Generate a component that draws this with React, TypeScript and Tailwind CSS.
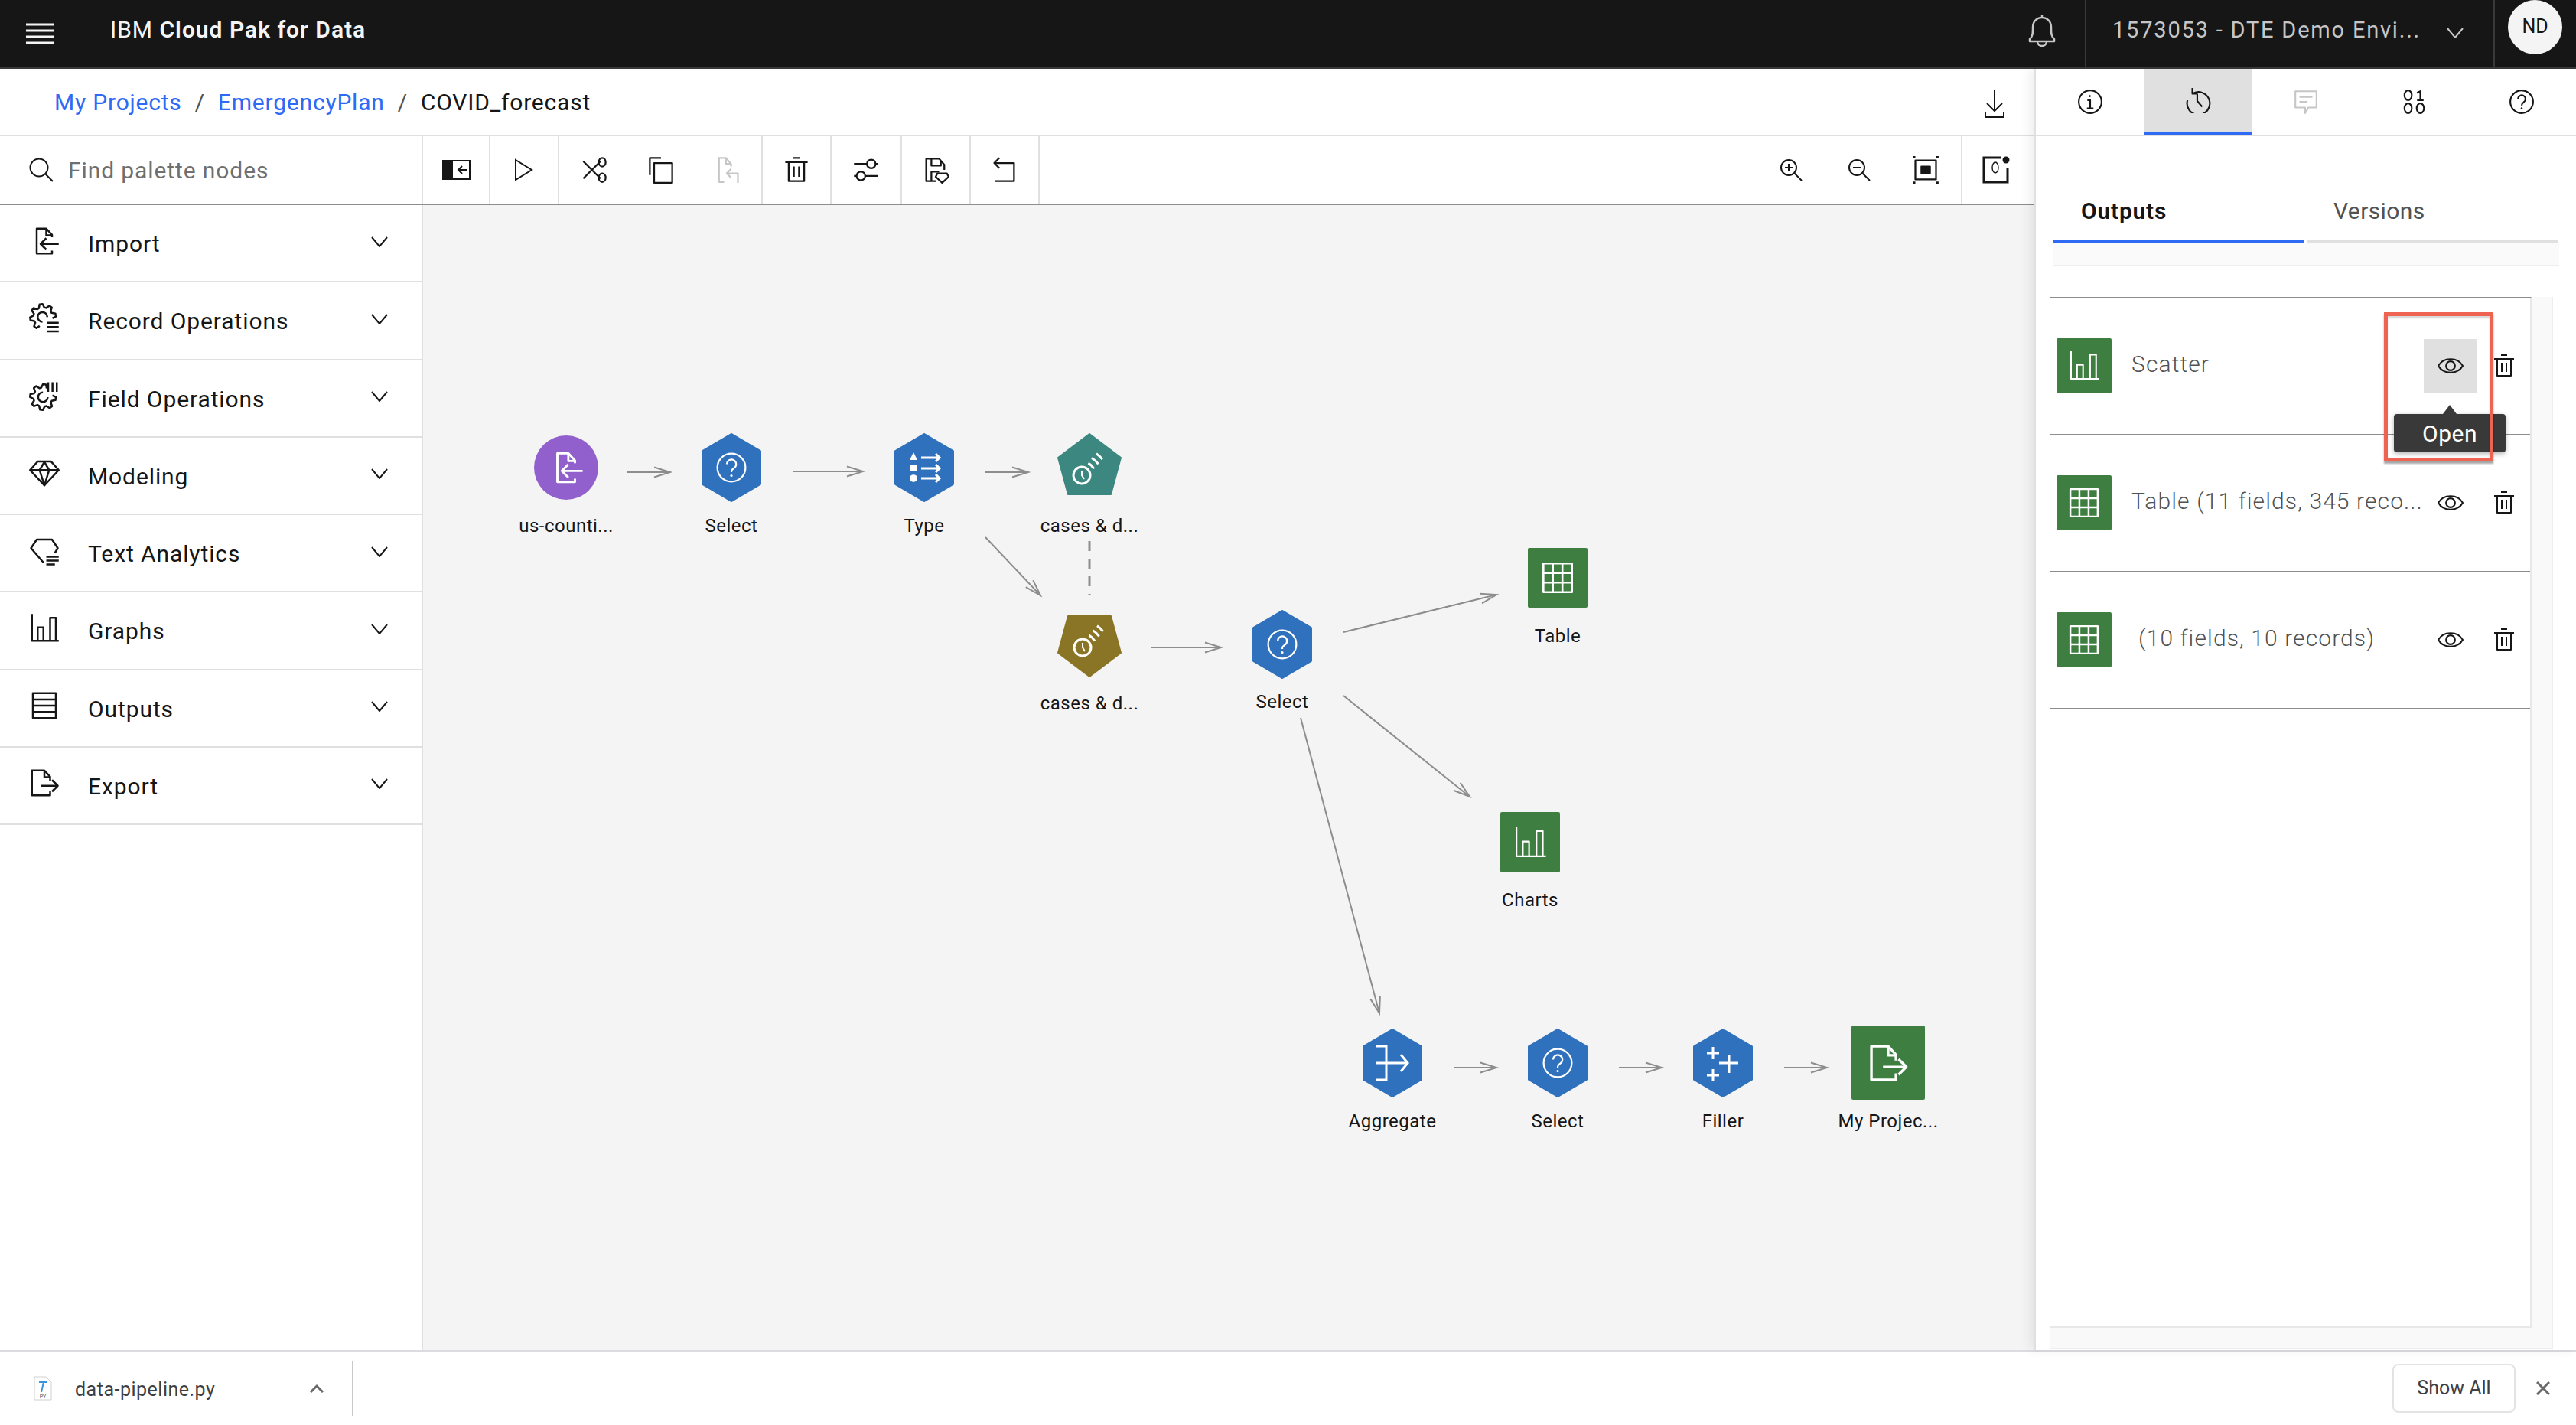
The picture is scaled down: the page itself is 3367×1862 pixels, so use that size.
import React from 'react';

type IconProps = React.SVGProps<SVGSVGElement>;

function Ico({ children, ...props }: IconProps) {
    return (
        <svg viewBox="0 0 32 32" fill="none" stroke="currentColor" strokeWidth={2} strokeLinejoin="round" {...props}>
            {children}
        </svg>
    );
}

// Partial gear outline, angles in degrees, clockwise from 3 o'clock
function gearPath(cx: number, cy: number, rIn: number, rOut: number, from: number, to: number) {
    const pts: string[] = [];
    const step = 45;
    const pos = (r: number, a: number) => {
        const rad = (a * Math.PI) / 180;
        return `${(cx + r * Math.cos(rad)).toFixed(2)} ${(cy + r * Math.sin(rad)).toFixed(2)}`;
    };
    for (let a = from; a < to; a += step) {
        pts.push(pos(rIn, a), pos(rOut, a + step * 0.22), pos(rOut, a + step * 0.52), pos(rIn, a + step * 0.74));
    }
    return 'M' + pts.join('L');
}

function arcPath(cx: number, cy: number, r: number, a0: number, a1: number) {
    const p = (a: number) => {
        const rad = (a * Math.PI) / 180;
        return `${(cx + r * Math.cos(rad)).toFixed(2)} ${(cy + r * Math.sin(rad)).toFixed(2)}`;
    };
    return `M${p(a0)}A${r} ${r} 0 0 1 ${p(a1)}`;
}

const DocImport = (p: IconProps) => (
    <Ico {...p}>
        <path d="M24 12V9.5L18 3H8V29H24V26" />
        <path d="M18 3V10H24" />
        <path d="M31 19H12M18 13L12 19L18 25" />
    </Ico>
);
const DocExport = (p: IconProps) => (
    <Ico {...p}>
        <path d="M22 14V9.5L16 3H3V29H22V24" />
        <path d="M16 3V10H22" />
        <path d="M12 19H30M24 13L30 19L24 25" />
    </Ico>
);
const RecordOps = (p: IconProps) => (
    <Ico {...p}>
        <path d={gearPath(14.5, 14.5, 10, 13.5, 110, 380)} />
        <path d="M19 14.5A5 5 0 1 0 14 19.5" />
        <path d="M19 20.5H31M19 25H31M19 29.5H31" />
    </Ico>
);
const FieldOps = (p: IconProps) => (
    <Ico {...p}>
        <path d={gearPath(14.5, 17.5, 10, 13.5, -10, 265)} />
        <path d="M14.5 12.5A5 5 0 1 0 19.5 17.5" />
        <path d="M20 2V12M24.5 2V12M29 2V12" />
    </Ico>
);
const Gem = (p: IconProps) => (
    <Ico {...p}>
        <path d="M9 4H23L31 13L16 29L1 13Z" />
        <path d="M1 13H31M11 13L16 4.5L21 13L16 29L11 13" />
    </Ico>
);
const TextAn = (p: IconProps) => (
    <Ico {...p}>
        <path d="M15 28L2 13L8 4H24L30 13L27 18" />
        <path d="M18 22H31M18 26H31M18 30H27" />
    </Ico>
);
const Bars = (p: IconProps) => (
    <Ico {...p}>
        <path d="M3 1V29H31" />
        <path d="M9 29V15H15V29M22 29V5H28V29" />
    </Ico>
);
const Rows = (p: IconProps) => (
    <Ico {...p}>
        <path d="M4 3H28V29H4ZM4 9.5H28M4 16H28M4 22.5H28" />
    </Ico>
);
const GridIcon = (p: IconProps) => (
    <Ico {...p}>
        <path d="M3 3H29V29H3ZM3 11.6H29M3 20.3H29M11.6 3V29M20.3 3V29" />
    </Ico>
);
const Eye = (p: IconProps) => (
    <Ico {...p}>
        <path d="M1 16C7 5 25 5 31 16C25 27 7 27 1 16Z" />
        <circle cx="16" cy="16" r="5.5" />
    </Ico>
);
const Trash = (p: IconProps) => (
    <Ico {...p}>
        <path d="M3 7H29M12 2H20M7 7V29H25V7M13 12V24M19 12V24" />
    </Ico>
);
const Magnifier = ({ sign, ...p }: IconProps & { sign?: 'plus' | 'minus' }) => (
    <Ico {...p}>
        <circle cx="13" cy="13" r="10" />
        <path d="M20.5 20.5L30 30" />
        {sign && <path d="M8 13H18" />}
        {sign === 'plus' && <path d="M13 8V18" />}
    </Ico>
);
const Help = (p: IconProps) => (
    <Ico {...p}>
        <ellipse cx="16" cy="16" rx="14" ry="14" />
        <path d="M11.5 12.5A4.6 4.6 0 1 1 18.5 16.5C17 17.5 16 18.5 16 20.5" />
        <circle cx="16" cy="24" r="1.2" fill="currentColor" stroke="none" />
    </Ico>
);

function ClockWaves({ cx, cy }: { cx: number; cy: number }) {
    return (
        <g fill="none" stroke="#fff" strokeWidth={3}>
            <circle cx={cx} cy={cy} r={11} />
            <path d={`M${cx} ${cy - 6}V${cy}L${cx + 3} ${cy + 5}`} strokeWidth={2} />
            <path d={arcPath(cx, cy, 18, -62, -28)} />
            <path d={arcPath(cx, cy, 26, -60, -34)} />
            <path d={arcPath(cx, cy, 34, -56, -38)} />
        </g>
    );
}

function QuestionMark({ cy = 45 }: { cy?: number }) {
    return <Help x={18} y={cy - 21} width={42} height={42} color="#fff" strokeWidth={1.7} />;
}

function Hex({ children }: { children?: React.ReactNode }) {
    return (
        <svg width="78" height="90" viewBox="0 0 78 90" className="block">
            <polygon points="39,1.5 76.5,23.5 76.5,66.5 39,88.5 1.5,66.5 1.5,23.5" fill="#2f71bd" stroke="#2f71bd" strokeWidth="3" strokeLinejoin="round" />
            {children}
        </svg>
    );
}

function Node({ className, gap, label, children }: { className: string; gap: string; label: string; children: React.ReactNode }) {
    return (
        <div className={`absolute w-[160px] flex flex-col items-center ${className}`}>
            {children}
            <span className={`${gap} text-[24px] leading-[30px] tracking-[0.5px] text-[#161616]`}>{label}</span>
        </div>
    );
}

function GreenTile({ children, className }: { children: React.ReactNode; className: string }) {
    return <div className={`flex items-center justify-center rounded-[2px] bg-[#3e7e41] text-white ${className}`}>{children}</div>;
}

function Edge({ x1, y1, x2, y2 }: { x1: number; y1: number; x2: number; y2: number }) {
    const a = Math.atan2(y2 - y1, x2 - x1);
    const head = (da: number) => `${x2 - 22 * Math.cos(a + da)} ${y2 - 22 * Math.sin(a + da)}`;
    return (
        <g>
            <path d={`M${x1} ${y1}L${x2} ${y2}`} />
            <path d={`M${head(0.3)}L${x2} ${y2}L${head(-0.3)}`} />
        </g>
    );
}

const edges = [
    [820, 617, 876, 617],
    [1036, 616, 1128, 616],
    [1288, 617, 1344, 617],
    [1288, 702, 1360, 778],
    [1504, 846, 1596, 846],
    [1756, 826, 1956, 777],
    [1756, 909, 1921, 1041],
    [1700, 938, 1803, 1324],
    [1900, 1395, 1956, 1395],
    [2116, 1395, 2172, 1395],
    [2332, 1395, 2388, 1395],
];

const palette = [
    { label: 'Import', icon: <DocImport width={40} height={40} /> },
    { label: 'Record Operations', icon: <RecordOps width={40} height={40} /> },
    { label: 'Field Operations', icon: <FieldOps width={40} height={40} /> },
    { label: 'Modeling', icon: <Gem width={40} height={40} /> },
    { label: 'Text Analytics', icon: <TextAn width={40} height={40} /> },
    { label: 'Graphs', icon: <Bars width={40} height={40} /> },
    { label: 'Outputs', icon: <Rows width={40} height={40} /> },
    { label: 'Export', icon: <DocExport width={40} height={40} /> },
];

const outputs = [
    { label: 'Scatter', kind: 'chart', text: 'ml-[26px] w-[382px]', active: true },
    { label: 'Table (11 fields, 345 reco...', kind: 'table', text: 'ml-[26px] w-[382px]', active: false },
    { label: '(10 fields, 10 records)', kind: 'table', text: 'ml-[35px] w-[373px]', active: false },
];

function ToolBtn({ className, children }: { className: string; children: React.ReactNode }) {
    return <div className={`flex h-full shrink-0 items-center justify-center border-r-2 border-[#e0e0e0] ${className}`}>{children}</div>;
}

export default function App() {
    return (
        <div className="flex h-screen w-full flex-col overflow-hidden bg-white font-['Roboto',sans-serif] text-[#161616]">
            {/* Top bar */}
            <header className="flex h-[90px] shrink-0 items-center border-b-2 border-[#393939] bg-[#161616] text-white">
                <svg width="36" height="28" viewBox="0 0 36 28" className="ml-[34px]" stroke="#f4f4f4" strokeWidth="3">
                    <path d="M0 2H36M0 10H36M0 18H36M0 26H36" />
                </svg>
                <div className="ml-[74px] mb-[10px] text-[30px] leading-none tracking-[1px] text-[#f4f4f4]">
                    IBM <span className="font-semibold">Cloud Pak for Data</span>
                </div>
                <div className="ml-auto flex h-full items-center">
                    <svg width="40" height="44" viewBox="0 0 40 44" fill="none" stroke="#c6c6c6" strokeWidth="2.5" strokeLinejoin="round" className="mr-[36px] mb-[8px]">
                        <path d="M20 1V5M4 33C8 29 8 26 8 18C8 10 13 5 20 5C27 5 32 10 32 18C32 26 32 29 36 33V36H4ZM14 36C14 44 26 44 26 36" />
                    </svg>
                    <div className="flex h-full w-[536px] items-center border-x-2 border-[#393939] pl-[34px]">
                        <span className="mb-[8px] text-[29px] tracking-[1.8px] text-[#c6c6c6]">1573053 - DTE Demo Envi...</span>
                        <svg width="22" height="14" viewBox="0 0 22 14" fill="none" stroke="#c6c6c6" strokeWidth="2" className="ml-[34px] mb-[2px]">
                            <path d="M1 1L11 13L21 1" />
                        </svg>
                    </div>
                    <div className="ml-[17px] mr-[18px] mb-[18px] flex h-[71px] w-[71px] items-center justify-center rounded-full bg-[#f4f4f4] text-[25px] text-[#161616]">ND</div>
                </div>
            </header>

            <div className="flex min-h-0 flex-1">
                {/* Main column */}
                <div className="flex w-[2659px] shrink-0 flex-col">
                    <div className="flex h-[88px] shrink-0 items-center border-b-2 border-[#e0e0e0] pl-[71px] text-[30px] tracking-[0.8px]">
                        <span className="text-[#2f6af5]">My Projects</span>
                        <span className="mx-[17px] text-[#525252]">/</span>
                        <span className="text-[#2f6af5]">EmergencyPlan</span>
                        <span className="mx-[17px] text-[#525252]">/</span>
                        <span>COVID_forecast</span>
                        <svg width="30" height="38" viewBox="0 0 30 38" fill="none" stroke="#161616" strokeWidth="2" className="ml-auto mr-[37px] mt-[6px]">
                            <path d="M15 1V28M5 18L15 28L25 18M3 29V36H27V29" />
                        </svg>
                    </div>

                    {/* Toolbar */}
                    <div className="flex h-[90px] shrink-0 items-center border-b-2 border-[#8d8d8d]">
                        <div className="flex h-full w-[553px] shrink-0 items-center border-r-2 border-[#e0e0e0] pl-[38px]">
                            <svg width="32" height="32" viewBox="0 0 32 32" fill="none" stroke="#161616" strokeWidth="2">
                                <circle cx="13" cy="13" r="11.5" />
                                <path d="M21 21L31 31" />
                            </svg>
                            <input
                                readOnly
                                placeholder="Find palette nodes"
                                className="ml-[19px] w-[420px] bg-transparent text-[30px] tracking-[0.9px] outline-none placeholder:text-[#6f6f6f]"
                            />
                        </div>
                        <ToolBtn className="w-[88px]">
                            <svg width="37" height="26" viewBox="0 0 37 26" fill="none">
                                <rect x="0" y="0" width="37" height="26" fill="#161616" />
                                <rect x="14" y="2" width="21" height="22" fill="#fff" />
                                <path d="M33 13H21M26 8L21 13L26 18" stroke="#161616" strokeWidth="2" />
                            </svg>
                        </ToolBtn>
                        <ToolBtn className="w-[90px]">
                            <svg width="26" height="30" viewBox="0 0 26 30" fill="none" stroke="#161616" strokeWidth="2" strokeLinejoin="miter">
                                <path d="M2 2L23 15L2 28Z" />
                            </svg>
                        </ToolBtn>
                        <ToolBtn className="w-[266px]">
                            <div className="flex w-full items-center">
                                <div className="flex flex-1 justify-center pl-[2px]">
                                    <Ico width={36} height={36}>
                                        <path d="M3 6L23 26M3 26L23 6" />
                                        <ellipse cx="25" cy="7" rx="4" ry="5" />
                                        <ellipse cx="25" cy="25" rx="4" ry="5" />
                                    </Ico>
                                </div>
                                <div className="flex flex-1 justify-center">
                                    <Ico width={36} height={36}>
                                        <path d="M3 22V2H16" />
                                        <rect x="8" y="8" width="21" height="23" />
                                    </Ico>
                                </div>
                                <div className="flex flex-1 justify-center">
                                    <Ico width={36} height={36} color="#c6c6c6">
                                        <path d="M20 12V9L14 2H6V30H12" />
                                        <path d="M14 2V9H20" />
                                        <path d="M20 15L15 20L20 25M15 20H28V31" />
                                    </Ico>
                                </div>
                            </div>
                        </ToolBtn>
                        <ToolBtn className="w-[90px]">
                            <Trash width={36} height={36} />
                        </ToolBtn>
                        <ToolBtn className="w-[92px]">
                            <Ico width={36} height={36}>
                                <path d="M2 9H17M27 9H30M2 23H5M15 23H30" />
                                <circle cx="22" cy="9" r="5" />
                                <circle cx="10" cy="23" r="5" />
                            </Ico>
                        </ToolBtn>
                        <ToolBtn className="w-[90px]">
                            <Ico width={36} height={36}>
                                <path d="M26 16V10L20 3H5V29H16" />
                                <path d="M11 3V11H22V6" />
                                <path d="M11 29V18H20" />
                                <path d="M18 20H29L31 24L23.5 31L16 24Z" />
                            </Ico>
                        </ToolBtn>
                        <ToolBtn className="w-[90px]">
                            <Ico width={36} height={36}>
                                <path d="M10 2L4 8L10 14M4 8H27V29H5" />
                            </Ico>
                        </ToolBtn>

                        <div className="ml-auto flex h-full items-center">
                            <div className="flex w-[89px] justify-center"><Magnifier sign="plus" width={32} height={32} /></div>
                            <div className="flex w-[89px] justify-center"><Magnifier sign="minus" width={32} height={32} /></div>
                            <div className="flex w-[89px] justify-center pr-[3px]">
                                <Ico width={36} height={36}>
                                    <path d="M1 1H4M28 1H31M1 31H4M28 31H31" strokeWidth={3} />
                                    <rect x="4" y="5" width="24" height="22" />
                                    <rect x="11" y="12" width="10" height="8" fill="currentColor" />
                                </Ico>
                            </div>
                            <div className="flex h-full w-[96px] items-center justify-center border-l-2 border-[#e0e0e0] pr-[7px]">
                                <svg width="36" height="36" viewBox="0 0 36 36" fill="none" stroke="#161616" strokeWidth="3">
                                    <path d="M24 2H2V34H33V15" />
                                    <ellipse cx="17" cy="15" rx="4" ry="7" strokeWidth="1.4" />
                                    <circle cx="31" cy="5" r="4.5" fill="#161616" stroke="none" />
                                </svg>
                            </div>
                        </div>
                    </div>

                    <div className="flex min-h-0 flex-1">
                        {/* Palette */}
                        <aside className="w-[553px] shrink-0 border-r-2 border-[#e0e0e0]">
                            {palette.map((row) => (
                                <div key={row.label} className="flex h-[101.25px] items-center border-b-2 border-[#e0e0e0] pl-[38px]">
                                    <div className="mb-[6px]">{row.icon}</div>
                                    <span className="ml-[37px] mt-[2px] text-[30px] tracking-[0.9px]">{row.label}</span>
                                    <svg width="22" height="14" viewBox="0 0 22 14" fill="none" stroke="#161616" strokeWidth="2" className="ml-auto mr-[44px] mb-[4px]">
                                        <path d="M1 1L11 13L21 1" />
                                    </svg>
                                </div>
                            ))}
                        </aside>

                        {/* Flow canvas */}
                        <main className="relative min-w-0 flex-1 overflow-hidden bg-[#f4f4f4]">
                            <svg viewBox="553 268 2106 1498" fill="none" stroke="#8d8d8d" strokeWidth="2" className="absolute left-0 top-0 h-[1498px] w-[2106px]">
                                {edges.map(([x1, y1, x2, y2], i) => (
                                    <Edge key={i} x1={x1} y1={y1} x2={x2} y2={y2} />
                                ))}
                                <path d="M1424 707V778" strokeWidth="3" strokeDasharray="13 10" />
                            </svg>

                            <Node className="left-[107px] top-[301px]" gap="mt-[19px]" label="us-counti...">
                                <div className="flex h-[84px] w-[84px] items-center justify-center rounded-full bg-[#9160cd]">
                                    <DocImport width={46} height={46} color="#fff" />
                                </div>
                            </Node>
                            <Node className="left-[323px] top-[298px]" gap="mt-[16px]" label="Select">
                                <Hex><QuestionMark /></Hex>
                            </Node>
                            <Node className="left-[575px] top-[298px]" gap="mt-[16px]" label="Type">
                                <Hex>
                                    <g fill="#fff">
                                        <polygon points="20,35 30,35 25,25" />
                                        <rect x="20.5" y="41" width="9" height="9" />
                                        <ellipse cx="25" cy="59" rx="5" ry="4.8" />
                                    </g>
                                    <path d="M35 32H59M54 27L59 32L54 37M35 46H59M54 41L59 46L54 51M35 59H59M54 54L59 59L54 64" fill="none" stroke="#fff" strokeWidth="3" />
                                </Hex>
                            </Node>
                            <Node className="left-[791px] top-[298px]" gap="mt-[25px]" label="cases & d...">
                                <svg width="84" height="81" viewBox="0 0 84 81" className="block">
                                    <polygon points="42,1 83,32 70,80 14,80 1,32" fill="#3c8880" stroke="#3c8880" strokeWidth="2" strokeLinejoin="round" />
                                    <ClockWaves cx={32} cy={55} />
                                </svg>
                            </Node>
                            <Node className="left-[791px] top-[536px]" gap="mt-[19px]" label="cases & d...">
                                <svg width="84" height="81" viewBox="0 0 84 81" className="block">
                                    <polygon points="42,80 83,49 70,1 14,1 1,49" fill="#8a7425" stroke="#8a7425" strokeWidth="2" strokeLinejoin="round" />
                                    <ClockWaves cx={33} cy={42} />
                                </svg>
                            </Node>
                            <Node className="left-[1043px] top-[529px]" gap="mt-[15px]" label="Select">
                                <Hex><QuestionMark /></Hex>
                            </Node>
                            <Node className="left-[1403px] top-[448px]" gap="mt-[22px]" label="Table">
                                <GreenTile className="h-[78px] w-[78px]"><GridIcon width={46} height={46} strokeWidth={1.8} /></GreenTile>
                            </Node>
                            <Node className="left-[1367px] top-[793px]" gap="mt-[21px]" label="Charts">
                                <GreenTile className="h-[79px] w-[78px]"><Bars width={44} height={44} strokeWidth={1.6} /></GreenTile>
                            </Node>
                            <Node className="left-[1187px] top-[1076px]" gap="mt-[16px]" label="Aggregate">
                                <Hex>
                                    <path d="M18 23H31V67H18M18 45H59M50 34L59 45L50 56" fill="none" stroke="#fff" strokeWidth="3" />
                                </Hex>
                            </Node>
                            <Node className="left-[1403px] top-[1076px]" gap="mt-[16px]" label="Select">
                                <Hex><QuestionMark /></Hex>
                            </Node>
                            <Node className="left-[1619px] top-[1076px]" gap="mt-[16px]" label="Filler">
                                <Hex>
                                    <path d="M26 24V40M18 32H34M26 53V68M18 61H34M47 34V58M34 45H59" fill="none" stroke="#fff" strokeWidth="3" />
                                </Hex>
                            </Node>
                            <Node className="left-[1835px] top-[1072px]" gap="mt-[13px]" label="My Projec...">
                                <GreenTile className="h-[97px] w-[96px]"><DocExport width={54} height={54} /></GreenTile>
                            </Node>
                        </main>
                    </div>
                </div>

                {/* Right panel */}
                <section className="relative z-10 min-w-0 flex-1 border-l-2 border-[#e0e0e0] bg-white shadow-[-6px_0_14px_rgba(0,0,0,0.07)]">
                    <div className="grid h-[88px] grid-cols-5 border-b-2 border-[#e0e0e0]">
                        <div className="flex items-center justify-center">
                            <Ico width={34} height={34}>
                                <circle cx="16" cy="16" r="14" />
                                <path d="M12 24H20M16 24V14H12.5" />
                                <circle cx="15.5" cy="9" r="1.3" fill="currentColor" stroke="none" />
                            </Ico>
                        </div>
                        <div className="flex items-center justify-center border-b-4 border-[#2f6af5] bg-[#e0e0e0]">
                            <Ico width={34} height={34}>
                                <path d="M9 1V8H15" />
                                <path d="M9 8A14 14 0 1 1 3 16" />
                                <path d="M15 8V17L21 24" />
                            </Ico>
                        </div>
                        <div className="flex items-center justify-center">
                            <Ico width={34} height={34} color="#c6c6c6">
                                <path d="M3 3H29V23H19L15 30V23H3Z" />
                                <path d="M8 10H24M8 16H18" />
                            </Ico>
                        </div>
                        <div className="flex items-center justify-center">
                            <Ico width={34} height={34}>
                                <ellipse cx="9" cy="8" rx="4.5" ry="6" />
                                <path d="M20 5L24 3V14M20 14H28" />
                                <ellipse cx="9" cy="24" rx="4.5" ry="6" />
                                <ellipse cx="24" cy="24" rx="4.5" ry="6" />
                            </Ico>
                        </div>
                        <div className="flex items-center justify-center">
                            <Help width={34} height={34} />
                        </div>
                    </div>

                    <div className="ml-[22px] flex h-[140px] items-end gap-[4px]">
                        <div className="w-[328px] border-b-4 border-[#2f6af5] pb-[20px] pl-[37px] text-[30px] leading-[36px] tracking-[0.8px] font-semibold">Outputs</div>
                        <div className="w-[328px] border-b-4 border-[#e0e0e0] pb-[20px] pl-[35px] text-[30px] leading-[36px] tracking-[0.4px] text-[#525252]">Versions</div>
                    </div>
                    <div className="ml-[22px] h-[30px] w-[662px] border-b-2 border-[#eeeeee] bg-[#fafafa]" />

                    <div className="relative ml-[19px] mt-[40px] h-[1375px] w-[657px] border-r-2 border-b-2 border-[#eeeeee] bg-[#f9f9f9]">
                        <div className="h-[1347px] w-[629px] border-t-2 border-r-2 border-b-2 border-t-[#8d8d8d] border-r-[#e8e8e8] border-b-[#e8e8e8] bg-white">
                            {outputs.map((row) => (
                                <div key={row.label} className="h-[179px] border-b-2 border-[#8d8d8d] pt-[52px] pl-[8px]">
                                    <div className="flex h-[72px] items-center">
                                        <GreenTile className="h-[72px] w-[72px] shrink-0">
                                            {row.kind === 'chart' ? <Bars width={42} height={42} strokeWidth={1.6} /> : <GridIcon width={44} height={44} strokeWidth={1.8} />}
                                        </GreenTile>
                                        <span className={`${row.text} mb-[6px] shrink-0 whitespace-nowrap text-[30px] font-light tracking-[1.1px] text-[#525252]`}>{row.label}</span>
                                        <div className={`flex h-[70px] w-[70px] shrink-0 items-center justify-center ${row.active ? 'bg-[#e0e0e0]' : ''}`}>
                                            <Eye width={34} height={34} strokeWidth={2} />
                                        </div>
                                        <div className="flex h-[70px] w-[70px] shrink-0 items-center justify-center">
                                            <Trash width={32} height={32} />
                                        </div>
                                    </div>
                                </div>
                            ))}
                        </div>

                        {/* Tooltip on the hovered eye button */}
                        <div className="absolute left-[449px] top-[153px] flex h-[50px] w-[146px] items-center justify-center rounded-[4px] bg-[#393939] text-[30px] tracking-[0.5px] text-white shadow-[0_2px_6px_rgba(0,0,0,0.3)]">
                            <div className="absolute left-[64px] top-[-12px] h-0 w-0 border-x-[9px] border-b-[12px] border-x-transparent border-b-[#393939]" />
                            Open
                        </div>
                        {/* Red annotation box */}
                        <div className="absolute left-[436px] top-[20px] h-[195px] w-[143px] border-[5px] border-[#ee6352] shadow-[0_3px_2px_rgba(0,0,0,0.35),inset_0_3px_2px_rgba(0,0,0,0.15)]" />
                    </div>
                </section>
            </div>

            {/* Download shelf */}
            <footer className="flex h-[98px] shrink-0 items-center border-t-2 border-[#dcdce0] bg-white text-[#3c4043]">
                <svg width="24" height="32" viewBox="0 0 24 32" className="ml-[44px] shrink-0">
                    <path d="M1 1H16L23 8V31H1Z" fill="#fff" stroke="#d0d0d0" />
                    <path d="M7 8H17M13 8L10 21" fill="none" stroke="#3b94e0" strokeWidth="2" />
                    <text x="12" y="29" textAnchor="middle" fontSize="7" fill="#555">PY</text>
                </svg>
                <span className="ml-[30px] mt-[4px] w-[306px] text-[25px] tracking-[0.5px]">data-pipeline.py</span>
                <svg width="20" height="12" viewBox="0 0 20 12" fill="none" stroke="#6a6a6a" strokeWidth="3">
                    <path d="M2 11L10 3L18 11" />
                </svg>
                <div className="ml-[36px] h-[72px] w-[2px] bg-[#c8c8c8]" />
                <div className="ml-auto flex h-[64px] w-[161px] items-center justify-center rounded-[8px] border-2 border-[#e3e3e6] text-[25px]">Show All</div>
                <svg width="18" height="18" viewBox="0 0 18 18" stroke="#6a6a6a" strokeWidth="3" className="ml-[27px] mr-[34px]">
                    <path d="M1 1L17 17M17 1L1 17" />
                </svg>
            </footer>
        </div>
    );
}
